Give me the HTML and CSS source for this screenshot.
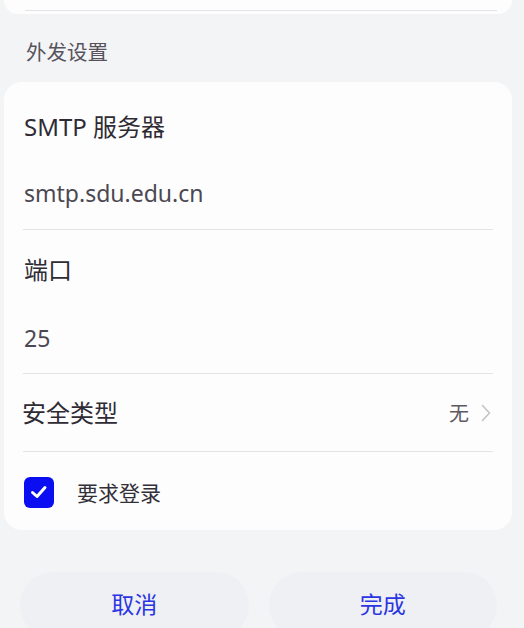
FILE: index.html
```html
<!DOCTYPE html>
<html lang="zh-CN">

<head>
    <meta charset="UTF-8">
    <meta name="viewport" content="width=device-width, initial-scale=1.0">
    <title>外发设置</title>
    <link rel="stylesheet" href="styles.css">
</head>

<body>
    <div id="page">
        <div class="card card-top">
            <div class="line"></div>
        </div>

        <div class="section-title">外发设置</div>

        <div class="card card-main">
            <div class="field">
                <div class="label">SMTP 服务器</div>
                <div class="value">smtp.sdu.edu.cn</div>
            </div>
            <div class="line"></div>
            <div class="field field-port">
                <div class="label">端口</div>
                <div class="value">25</div>
            </div>
            <div class="line"></div>
            <div class="row">
                <div class="label">安全类型</div>
                <div class="row-right">
                    <span class="row-value">无</span>
                    <svg class="chevron" width="10" height="18" viewBox="0 0 10 18">
                        <path d="M1.5 1.5 L8.5 9 L1.5 16.5" fill="none" stroke="#c4c2c8" stroke-width="1.6" stroke-linecap="round" stroke-linejoin="round" />
                    </svg>
                </div>
            </div>
            <div class="line"></div>
            <div class="check-row">
                <span class="checkbox">
                    <svg width="22" height="22" viewBox="0 0 22 22">
                        <path d="M4.5 11.5 L9 15.5 L17 6.5" fill="none" stroke="#fff" stroke-width="3" stroke-linecap="round" stroke-linejoin="round" />
                    </svg>
                </span>
                <span class="check-label">要求登录</span>
            </div>
        </div>

        <div class="buttons">
            <div class="btn">取消</div>
            <div class="btn">完成</div>
        </div>
    </div>
</body>

</html>
```

FILE: styles.css
```css
* {
    padding: 0;
    margin: 0;
    box-sizing: border-box;
}

body {
    background: #f3f4f6;
    font-family: "Noto Sans", "Noto Sans CJK SC", sans-serif;
    color: #322e37;
}

#page {
    width: 524px;
    height: 628px;
    overflow: hidden;
    padding: 0 12px 0 4px;
}

.card {
    background: #fdfdfd;
    border-radius: 18px;
}

.card-top {
    height: 14px;
    border-radius: 0 0 18px 18px;
    padding: 10px 15px 0 21px;
}

.line {
    height: 1px;
    background: #e4e3e8;
}

.section-title {
    height: 68px;
    padding-top: 24px;
    padding-left: 22px;
    font-size: 20.5px;
    line-height: 28px;
    color: #57535c;
}

.card-main {
    height: 448px;
    padding: 28px 19px 0 20px;
}

.card-main .line {
    margin-left: -1px;
}

.label {
    font-size: 24px;
    line-height: 34px;
    color: #2f2b34;
}

.value {
    margin-top: 32px;
    font-size: 23px;
    line-height: 34px;
    color: #4c4852;
}

.field {
    padding-bottom: 19px;
}

.field-port {
    padding-top: 23px;
    padding-bottom: 18px;
}

.field-port .value {
    margin-top: 34px;
}

.row {
    height: 77px;
    display: flex;
    align-items: center;
    justify-content: space-between;
}

.row .label {
    margin-left: -2px;
}

.row-right {
    display: flex;
    align-items: center;
    gap: 12px;
    padding-right: 2px;
}

.row-value {
    font-size: 20px;
    color: #5d5963;
}

.check-row {
    display: flex;
    align-items: center;
    height: 80px;
}

.checkbox {
    width: 30px;
    height: 31px;
    border-radius: 6px;
    background: #0b0ef0;
    display: flex;
    align-items: center;
    justify-content: center;
}

.check-label {
    margin-left: 23px;
    font-size: 21px;
    color: #332f38;
}

.buttons {
    display: flex;
    gap: 20px;
    margin-top: 42px;
    padding: 0 15px 0 16px;
}

.btn {
    flex: 1;
    height: 66px;
    border-radius: 33px;
    background: #eef0f3;
    color: #2b35e2;
    font-size: 23px;
    text-align: center;
    padding-top: 17px;
    line-height: 30px;
}
```
